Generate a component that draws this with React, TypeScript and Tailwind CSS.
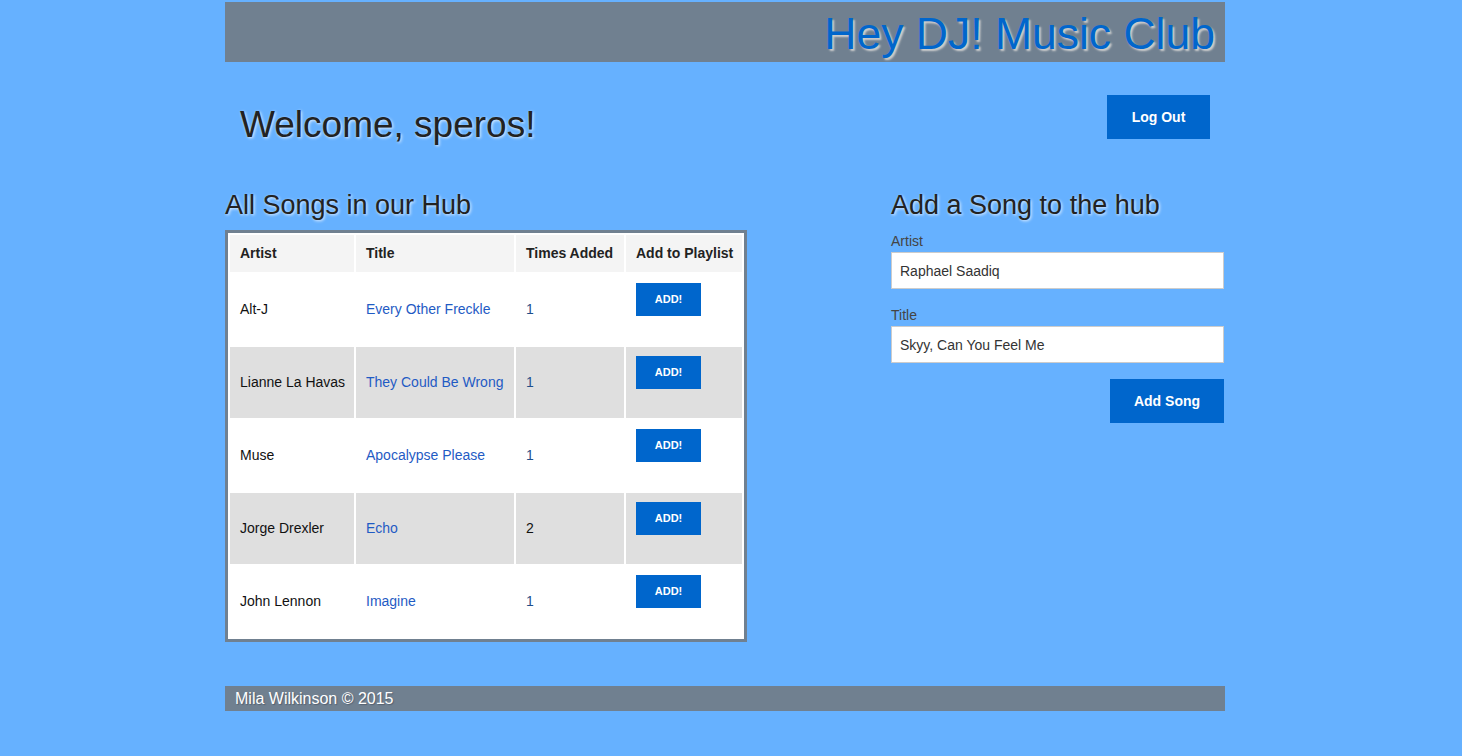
import React from "react";

const songs = [
  { artist: "Alt-J", title: "Every Other Freckle", times: "1", gray: false },
  { artist: "Lianne La Havas", title: "They Could Be Wrong", times: "1", gray: true },
  { artist: "Muse", title: "Apocalypse Please", times: "1", gray: false },
  { artist: "Jorge Drexler", title: "Echo", times: "2", gray: true },
  { artist: "John Lennon", title: "Imagine", times: "1", gray: false },
];

export default function App() {
  return (
    <div
      className="min-h-screen w-full bg-[#66b1ff] pt-[2px] pl-[225px] text-[#222]"
      style={{ fontFamily: '"Liberation Sans", Arial, sans-serif' }}
    >
      <div className="w-[1000px]">
        <header className="h-[60px] bg-[#708090] flex items-center justify-end pr-[10px] pt-[4px]">
          <h1 className="text-[44.5px] leading-none text-[#0066cc] [text-shadow:2px_2px_2px_#d0d0d0]">
            Hey DJ! Music Club
          </h1>
        </header>

        <div className="flex justify-between items-start">
          <h2 className="mt-[44px] ml-[15px] text-[37px] leading-none text-[#222] [text-shadow:1px_1px_3px_#e8f2ff]">
            Welcome, speros!
          </h2>
          <button className="mt-[33px] mr-[15px] w-[103px] h-[44px] bg-[#0066cc] text-white text-[14px] font-bold">
            Log Out
          </button>
        </div>

        <div className="flex mt-[49px]">
          <section className="w-[522px]">
            <h3 className="text-[27px] leading-none text-[#222] [text-shadow:1px_1px_3px_#e8f2ff]">
              All Songs in our Hub
            </h3>
            <div className="mt-[11px] border-[3px] border-[#708090] bg-white p-[2px] grid grid-cols-[124px_158px_108px_116px] auto-rows-[71px] grid-rows-[37px] gap-[2px] text-[14px]">
              <div className="bg-[#f4f4f4] font-bold flex items-center pl-[10px]">Artist</div>
              <div className="bg-[#f4f4f4] font-bold flex items-center pl-[10px]">Title</div>
              <div className="bg-[#f4f4f4] font-bold flex items-center pl-[10px]">Times Added</div>
              <div className="bg-[#f4f4f4] font-bold flex items-center pl-[10px]">Add to Playlist</div>
              {songs.map((s) => (
                <React.Fragment key={s.title}>
                  <div className={`${s.gray ? "bg-[#dfdfdf]" : "bg-white"} flex items-center pl-[10px] text-[#111]`}>
                    {s.artist}
                  </div>
                  <div className={`${s.gray ? "bg-[#dfdfdf]" : "bg-white"} flex items-center pl-[10px] text-[#1f5bc4]`}>
                    {s.title}
                  </div>
                  <div
                    className={`${s.gray ? "bg-[#dfdfdf]" : "bg-white"} flex items-center pl-[10px] ${
                      s.times === "1" ? "text-[#1f4f8a]" : "text-[#111]"
                    }`}
                  >
                    {s.times}
                  </div>
                  <div className={`${s.gray ? "bg-[#dfdfdf]" : "bg-white"} pl-[10px] pt-[9px]`}>
                    <button className="w-[65px] h-[33px] bg-[#0066cc] text-white text-[11px] font-bold">
                      ADD!
                    </button>
                  </div>
                </React.Fragment>
              ))}
            </div>
          </section>

          <section className="ml-[144px] w-[333px]">
            <h3 className="text-[27px] leading-none text-[#222] [text-shadow:1px_1px_3px_#e8f2ff]">
              Add a Song to the hub
            </h3>
            <label className="block mt-[12px] h-[20px] leading-[20px] text-[14px] text-[#444]">Artist</label>
            <input
              readOnly
              value="Raphael Saadiq"
              className="mt-[1px] block w-[333px] h-[37px] bg-white border border-[#cccccc] pl-[8px] text-[14px] text-[#333] outline-none"
            />
            <label className="block mt-[16px] h-[20px] leading-[20px] text-[14px] text-[#444]">Title</label>
            <input
              readOnly
              value="Skyy, Can You Feel Me"
              className="mt-[1px] block w-[333px] h-[37px] bg-white border border-[#cccccc] pl-[8px] text-[14px] text-[#333] outline-none"
            />
            <div className="flex justify-end mt-[16px]">
              <button className="w-[114px] h-[44px] bg-[#0066cc] text-white text-[14px] font-bold">Add Song</button>
            </div>
          </section>
        </div>

        <footer className="mt-[44px] h-[25px] bg-[#708090] flex items-center pl-[10px] text-white text-[16px] [text-shadow:1px_1px_1px_#556070]">
          Mila Wilkinson © 2015
        </footer>
      </div>
    </div>
  );
}
